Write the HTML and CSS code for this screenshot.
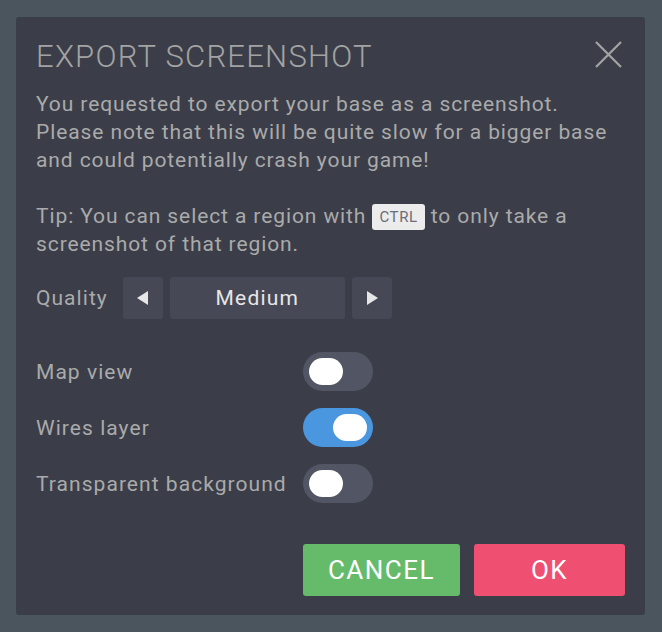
FILE: index.html
```html
<!DOCTYPE html>
<html>
<head>
<meta charset="utf-8">
<link rel="stylesheet" href="styles.css">
</head>
<body>
<div class="dialog">
  <div class="header">
    <h1 class="title">EXPORT SCREENSHOT</h1>
    <button class="close" aria-label="Close">
      <svg width="27" height="27" viewBox="0 0 27 27"><path d="M1 1 L26 26 M26 1 L1 26" stroke="#a3a3a3" stroke-width="2.2" fill="none"/></svg>
    </button>
  </div>
  <p class="text">You requested to export your base as a screenshot. Please note that this will be quite slow for a bigger base and could potentially crash your game!</p>
  <p class="text tip">Tip: You can select a region with <span class="key">CTRL</span> to only take a screenshot of that region.</p>
  <div class="quality">
    <span class="label qlabel">Quality</span>
    <button class="qbtn">
      <svg width="12" height="14" viewBox="0 0 12 14"><path d="M11 0 L0 7 L11 14 Z" fill="#e6e6e6"/></svg>
    </button>
    <div class="qvalue">Medium</div>
    <button class="qbtn">
      <svg width="12" height="14" viewBox="0 0 12 14"><path d="M1 0 L12 7 L1 14 Z" fill="#e6e6e6"/></svg>
    </button>
  </div>
  <div class="options">
    <span class="label">Map view</span>
    <span class="toggle"><span class="knob"></span></span>
    <span class="label">Wires layer</span>
    <span class="toggle on"><span class="knob"></span></span>
    <span class="label">Transparent background</span>
    <span class="toggle"><span class="knob"></span></span>
  </div>
  <div class="actions">
    <button class="btn cancel">CANCEL</button>
    <button class="btn ok">OK</button>
  </div>
</div>
</body>
</html>
```
FILE: styles.css
```css
html, body {
  margin: 0;
  padding: 0;
}
body {
  background: #4a555e;
  font-family: Roboto, "Liberation Sans", sans-serif;
  width: 662px;
  height: 632px;
  overflow: hidden;
}
.dialog {
  box-sizing: border-box;
  margin: 17px 0 0 16px;
  width: 629px;
  height: 598px;
  background: #3b3e49;
  border-radius: 3px;
  padding: 22px 20px 19px 20px;
  display: flex;
  flex-direction: column;
}
.header {
  display: flex;
  justify-content: space-between;
  align-items: flex-start;
}
.title {
  margin: 0;
  font-size: 31px;
  line-height: 36px;
  font-weight: 300;
  color: #a3a3a3;
  letter-spacing: 1.25px;
}
.close {
  margin: 2px 3px 0 0;
  padding: 0;
  border: 0;
  background: none;
  width: 27px;
  height: 27px;
}
.close svg { display: block; }
.text {
  margin: 15px 0 0;
  font-size: 21px;
  line-height: 28px;
  color: #aaaaaa;
  letter-spacing: 0.9px;
}
.tip {
  margin-top: 28px;
}
.key {
  display: inline-block;
  background: #ececec;
  color: #6a6d77;
  font-size: 15px;
  line-height: 26px;
  padding: 0 7px;
  border-radius: 3px;
  letter-spacing: 0.6px;
  vertical-align: 1px;
}
.quality {
  display: flex;
  align-items: center;
  gap: 7px;
  margin-top: 19px;
}
.label {
  font-size: 21px;
  color: #aaaaaa;
  letter-spacing: 1.05px;
}
.qlabel {
  margin-right: 8px;
}
.qbtn {
  width: 40px;
  height: 42px;
  border: 0;
  padding: 0;
  border-radius: 3px;
  background: #464955;
  display: flex;
  align-items: center;
  justify-content: center;
}
.qvalue {
  width: 175px;
  height: 42px;
  border-radius: 3px;
  background: #464955;
  color: #e6e6e6;
  font-size: 21px;
  line-height: 42px;
  text-align: center;
  letter-spacing: 1.2px;
}
.options {
  display: grid;
  grid-template-columns: 267px 70px;
  row-gap: 17px;
  align-items: center;
  margin-top: 33px;
}
.toggle {
  box-sizing: border-box;
  width: 70px;
  height: 39px;
  border-radius: 20px;
  background: #525563;
  padding: 6px;
  display: flex;
}
.toggle.on {
  background: #4a96df;
  justify-content: flex-end;
}
.knob {
  width: 34px;
  height: 27px;
  border-radius: 14px;
  background: #ffffff;
}
.actions {
  margin-top: auto;
  display: flex;
  justify-content: flex-end;
  gap: 14px;
}
.btn {
  height: 52px;
  border: 0;
  border-radius: 3px;
  color: #ffffff;
  font-family: Roboto, "Liberation Sans", sans-serif;
  font-size: 26px;
  letter-spacing: 1.5px;
  padding: 0;
}
.cancel {
  width: 157px;
  background: #66bb6a;
}
.ok {
  width: 151px;
  background: #ef5072;
}
```
